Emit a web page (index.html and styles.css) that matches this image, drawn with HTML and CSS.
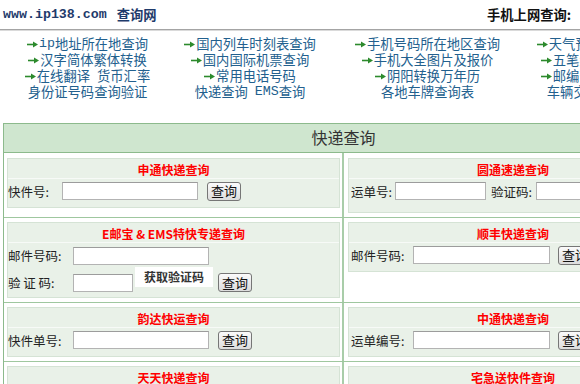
FILE: index.html
```html
<!DOCTYPE html>
<html lang="zh-CN">
<head>
<meta charset="utf-8">
<title>快递查询 - ip138</title>
<link rel="stylesheet" href="styles.css">
</head>
<body>
<div class="top">
  <div class="brand"><span class="url">www.ip138.com</span><span class="site">查询网</span></div>
  <div class="mobile">手机上网查询:</div>
</div>
<div class="rule"></div>

<div class="links">
  <a class="lk"><svg class="arr" width="11" height="7" viewBox="0 0 11 7"><path d="M0 3.5H7" stroke="#2c8a2c" stroke-width="1.6"/><path d="M6 0.5L11 3.5L6 6.5Z" fill="#2c8a2c"/></svg><span class="lat">ip</span>地址所在地查询</a>
  <a class="lk"><svg class="arr" width="11" height="7" viewBox="0 0 11 7"><path d="M0 3.5H7" stroke="#2c8a2c" stroke-width="1.6"/><path d="M6 0.5L11 3.5L6 6.5Z" fill="#2c8a2c"/></svg>国内列车时刻表查询</a>
  <a class="lk"><svg class="arr" width="11" height="7" viewBox="0 0 11 7"><path d="M0 3.5H7" stroke="#2c8a2c" stroke-width="1.6"/><path d="M6 0.5L11 3.5L6 6.5Z" fill="#2c8a2c"/></svg>手机号码所在地区查询</a>
  <a class="lk"><svg class="arr" width="11" height="7" viewBox="0 0 11 7"><path d="M0 3.5H7" stroke="#2c8a2c" stroke-width="1.6"/><path d="M6 0.5L11 3.5L6 6.5Z" fill="#2c8a2c"/></svg>天气预报<span class="lat">-</span>预报五天</a>

  <a class="lk"><svg class="arr" width="11" height="7" viewBox="0 0 11 7"><path d="M0 3.5H7" stroke="#2c8a2c" stroke-width="1.6"/><path d="M6 0.5L11 3.5L6 6.5Z" fill="#2c8a2c"/></svg>汉字简体繁体转换</a>
  <a class="lk"><svg class="arr" width="11" height="7" viewBox="0 0 11 7"><path d="M0 3.5H7" stroke="#2c8a2c" stroke-width="1.6"/><path d="M6 0.5L11 3.5L6 6.5Z" fill="#2c8a2c"/></svg>国内国际机票查询</a>
  <a class="lk"><svg class="arr" width="11" height="7" viewBox="0 0 11 7"><path d="M0 3.5H7" stroke="#2c8a2c" stroke-width="1.6"/><path d="M6 0.5L11 3.5L6 6.5Z" fill="#2c8a2c"/></svg>手机大全图片及报价</a>
  <a class="lk"><svg class="arr" width="11" height="7" viewBox="0 0 11 7"><path d="M0 3.5H7" stroke="#2c8a2c" stroke-width="1.6"/><path d="M6 0.5L11 3.5L6 6.5Z" fill="#2c8a2c"/></svg>五笔编码拼音查询</a>

  <a class="lk"><svg class="arr" width="11" height="7" viewBox="0 0 11 7"><path d="M0 3.5H7" stroke="#2c8a2c" stroke-width="1.6"/><path d="M6 0.5L11 3.5L6 6.5Z" fill="#2c8a2c"/></svg>在线翻译<span class="sp"></span>货币汇率</a>
  <a class="lk"><svg class="arr" width="11" height="7" viewBox="0 0 11 7"><path d="M0 3.5H7" stroke="#2c8a2c" stroke-width="1.6"/><path d="M6 0.5L11 3.5L6 6.5Z" fill="#2c8a2c"/></svg>常用电话号码</a>
  <a class="lk"><svg class="arr" width="11" height="7" viewBox="0 0 11 7"><path d="M0 3.5H7" stroke="#2c8a2c" stroke-width="1.6"/><path d="M6 0.5L11 3.5L6 6.5Z" fill="#2c8a2c"/></svg>阴阳转换万年历</a>
  <a class="lk"><svg class="arr" width="11" height="7" viewBox="0 0 11 7"><path d="M0 3.5H7" stroke="#2c8a2c" stroke-width="1.6"/><path d="M6 0.5L11 3.5L6 6.5Z" fill="#2c8a2c"/></svg>邮编查询区号查询</a>

  <a class="lk">身份证号码查询验证</a>
  <a class="lk">快递查询<span class="sp"></span><span class="lat">EMS</span>查询</a>
  <a class="lk">各地车牌查询表</a>
  <a class="lk">车辆交通违章查询</a>
</div>

<div class="panel">
  <div class="panel-head">快递查询</div>

  <div class="prow first">
    <div class="pcell left">
      <div class="qbox">
        <div class="qtitle">申通快递查询</div>
        <div class="qrow">
          <span class="lbl w54">快件号:</span><input class="ipt w136" type="text"><button class="btn">查询</button>
        </div>
      </div>
    </div>
    <div class="pcell right">
      <div class="qbox">
        <div class="qtitle">圆通速递查询</div>
        <div class="qrow tall">
          <span class="lbl w44">运单号:</span><input class="ipt w91" type="text"><span class="lbl w45 ml5">验证码:</span><input class="ipt w60" type="text">
        </div>
      </div>
    </div>
  </div>

  <div class="prow">
    <div class="pcell left">
      <div class="qbox">
        <div class="qtitle">E邮宝 &amp; EMS特快专递查询</div>
        <div class="qrow r25">
          <span class="lbl w65">邮件号码:</span><input class="ipt w136" type="text">
        </div>
        <div class="qrow r29">
          <span class="lbl w65">验&nbsp;证&nbsp;码:</span><input class="ipt w60" type="text"><span class="captcha">获取验证码</span><button class="btn ml5">查询</button>
        </div>
      </div>
    </div>
    <div class="pcell right">
      <div class="qbox">
        <div class="qtitle">顺丰快递查询</div>
        <div class="qrow">
          <span class="lbl w62">邮件号码:</span><input class="ipt w137" type="text"><button class="btn ml8">查询</button>
        </div>
      </div>
    </div>
  </div>

  <div class="prow">
    <div class="pcell left">
      <div class="qbox">
        <div class="qtitle">韵达快运查询</div>
        <div class="qrow">
          <span class="lbl w65">快件单号:</span><input class="ipt w136" type="text"><button class="btn">查询</button>
        </div>
      </div>
    </div>
    <div class="pcell right">
      <div class="qbox">
        <div class="qtitle">中通快递查询</div>
        <div class="qrow">
          <span class="lbl w62">运单编号:</span><input class="ipt w137" type="text"><button class="btn ml8">查询</button>
        </div>
      </div>
    </div>
  </div>

  <div class="prow">
    <div class="pcell left">
      <div class="qbox">
        <div class="qtitle">天天快递查询</div>
        <div class="qrow">
          <span class="lbl w65">运单号码:</span><input class="ipt w136" type="text"><button class="btn">查询</button>
        </div>
      </div>
    </div>
    <div class="pcell right">
      <div class="qbox">
        <div class="qtitle">宅急送快件查询</div>
        <div class="qrow">
          <span class="lbl w62">运单号码:</span><input class="ipt w137" type="text"><button class="btn ml8">查询</button>
        </div>
      </div>
    </div>
  </div>
</div>
</body>
</html>
```

FILE: styles.css
```css
* { box-sizing: border-box; }

html, body {
  margin: 0;
  padding: 0;
  background: #ffffff;
  overflow: hidden;
}

body {
  width: 580px;
  height: 384px;
  font-family: "Noto Sans CJK SC", "Noto Sans", sans-serif;
  font-size: 13.3px;
  color: #222;
}

/* header */
.top {
  display: grid;
  grid-template-columns: 484px auto;
  align-items: center;
  height: 29px;
  padding-left: 3px;
  white-space: nowrap;
}

.brand {
  color: #1f3b6b;
  font-weight: bold;
  display: flex;
  align-items: center;
  height: 20px;
}

.url {
  font-family: "Liberation Mono", monospace;
  font-size: 13.3px;
  font-weight: bold;
}

.site {
  margin-left: 10px;
  font-size: 13.3px;
}

.mobile {
  font-weight: bold;
  color: #111;
  font-size: 13.3px;
}

.rule {
  height: 2px;
  border-top: 1px solid #a4a4a4;
  border-bottom: 1px solid #dadada;
}

/* quick links */
.links {
  display: grid;
  grid-template-columns: 175px 150px 205px 140px;
  grid-auto-rows: 16px;
  width: 670px;
  height: 64px;
  margin-top: 5px;
  white-space: nowrap;
}

.lk {
  display: flex;
  justify-content: center;
  align-items: center;
  height: 16px;
  line-height: 16px;
  color: #22608e;
  text-decoration: none;
  font-size: 13.3px;
}

.arr {
  flex: none;
  display: block;
  margin-right: 1px;
}

.lat {
  font-family: "Liberation Mono", monospace;
}

.sp {
  display: inline-block;
  width: 7px;
}

/* panel */
.panel {
  margin: 23px 0 0 3px;
  width: 681px;
  border: 1px solid #8cba8c;
}

.panel-head {
  height: 29px;
  line-height: 27px;
  background: #cfe6cf;
  border-bottom: 1px solid #8cba8c;
  text-align: center;
  font-size: 16px;
  color: #333;
}

.prow {
  display: flex;
  align-items: stretch;
  border-top: 1px solid #9fc79f;
}

.prow.first {
  border-top: none;
}

.pcell {
  padding-top: 4px;
  padding-bottom: 4px;
}

.prow.first .pcell {
  padding-top: 5px;
}

.pcell.left {
  width: 338px;
  padding-left: 3px;
  padding-right: 2px;
}

.pcell.right {
  width: 341px;
  border-left: 2px solid #a9cda9;
  padding-left: 4px;
  padding-right: 5px;
}

.qbox {
  border: 1px solid #d5e3d5;
  background: #e9f1e8;
}

.qtitle {
  height: 20px;
  line-height: 21px;
  border-bottom: 1px solid #f7faf7;
  text-align: center;
  color: #f00;
  font-weight: bold;
  font-size: 12px;
  white-space: nowrap;
}

.qrow {
  display: flex;
  align-items: center;
  height: 28px;
  padding-bottom: 4px;
  white-space: nowrap;
}

.pcell.right .qrow {
  padding-left: 2px;
}

.qrow.tall {
  height: 33px;
  padding-bottom: 9px;
}

.qrow.r25 {
  height: 25px;
  padding-bottom: 0;
}

.qrow.r29 {
  height: 29px;
  padding-bottom: 0;
}

.lbl {
  display: inline-block;
  flex: none;
  font-size: 12.5px;
  color: #222;
}

.w44 { width: 44px; }
.w45 { width: 45px; }
.w54 { width: 54px; }
.w62 { width: 62px; }
.w65 { width: 65px; }

.ipt {
  flex: none;
  height: 18px;
  margin: 0;
  padding: 0 2px;
  border: 1px solid #b3b3b3;
  border-top-color: #9c9c9c;
  background: #fff;
  font-size: 12px;
}

.w60 { width: 60px; }
.w91 { width: 91px; }
.w136 { width: 136px; }
.w137 { width: 137px; }

.ml5 { margin-left: 5px; }
.ml8 { margin-left: 8px; }

.btn {
  flex: none;
  width: 34px;
  height: 19px;
  margin: 0 0 0 9px;
  padding: 0;
  border: 1px solid #767676;
  border-radius: 3px;
  background: linear-gradient(#fbfbfb, #dcdcdc);
  font-family: "Noto Sans CJK SC", sans-serif;
  font-size: 13px;
  line-height: 16px;
  color: #111;
}

.btn.ml5 { margin-left: 5px; }
.btn.ml8 { margin-left: 8px; }

.captcha {
  flex: none;
  align-self: flex-start;
  margin-top: -1px;
  margin-left: 2px;
  width: 78px;
  height: 20px;
  line-height: 19px;
  background: #fff;
  text-align: center;
  font-weight: bold;
  font-size: 12px;
  color: #333;
}
```
